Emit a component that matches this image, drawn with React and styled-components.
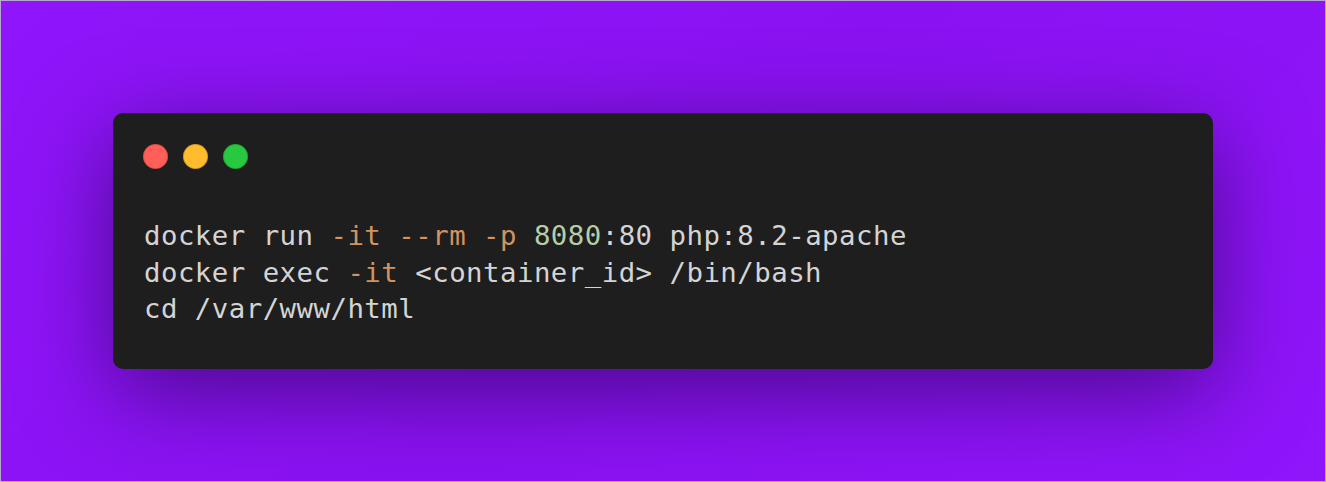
import React from 'react';
import styled, { createGlobalStyle } from 'styled-components';

const GlobalStyle = createGlobalStyle`
  html, body {
    margin: 0;
    padding: 0;
  }
  body {
    background: #8d14f7;
  }
`;

const Page = styled.div`
  box-sizing: border-box;
  width: 1326px;
  height: 482px;
  display: flex;
  align-items: center;
  justify-content: center;
  background: linear-gradient(135deg, #8f15fa 0%, #8a12f2 50%, #8f15fa 100%);
  border: 1px solid #b9a6cc;
`;

const Window = styled.div`
  box-sizing: border-box;
  width: 1100px;
  height: 256px;
  background: #1e1e1e;
  border-radius: 10px;
  padding: 31px 30px 0 30px;
  box-shadow: 0 22px 90px rgba(20, 0, 50, 0.55);
`;

const Dots = styled.div`
  display: flex;
  gap: 15px;
`;

const Dot = styled.span`
  width: 25px;
  height: 25px;
  border-radius: 50%;
  background: ${props => props.color};
  box-shadow: inset 0 0 0 1px rgba(0, 0, 0, 0.18);
`;

const Code = styled.pre`
  margin: 49px 0 0 1px;
  font-family: 'DejaVu Sans Mono', monospace;
  font-size: 27.4px;
  letter-spacing: 0.46px;
  line-height: 36.5px;
  color: #d4d4d4;
  white-space: pre;
`;

const Flag = styled.span`
  color: #d3935f;
`;

const Num = styled.span`
  color: #b5cea8;
`;

export default function App() {
  return (
    <>
      <GlobalStyle />
      <Page>
        <Window>
          <Dots>
            <Dot color="#ff5f57" />
            <Dot color="#febc2e" />
            <Dot color="#28c840" />
          </Dots>
          <Code>
            docker run <Flag>-it</Flag> <Flag>--rm</Flag> <Flag>-p</Flag> <Num>8080</Num>:80 php:8.2-apache{'\n'}
            docker exec <Flag>-it</Flag> {'<container_id>'} /bin/bash{'\n'}
            cd /var/www/html
          </Code>
        </Window>
      </Page>
    </>
  );
}
